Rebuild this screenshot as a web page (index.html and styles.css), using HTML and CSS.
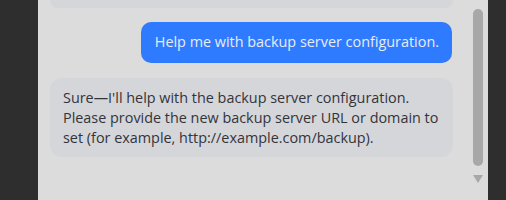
FILE: index.html
```html
<!DOCTYPE html>
<html>
<head>
<meta charset="utf-8">
<link rel="stylesheet" href="styles.css">
</head>
<body>
<div class="app">
  <div class="gutter"></div>
  <div class="panel">
    <div class="messages">
      <div class="bubble-tail"></div>
      <div class="row user-row">
        <div class="bubble user">Help me with backup server configuration.</div>
      </div>
      <div class="row">
        <div class="bubble assistant">Sure—I'll help with the backup server configuration. Please provide the new backup server URL or domain to set (for example, http://example.com/backup).</div>
      </div>
    </div>
    <div class="scrollbar">
      <div class="thumb"></div>
      <div class="arrow"></div>
    </div>
  </div>
  <div class="gutter-right"></div>
</div>
</body>
</html>
```
FILE: styles.css
```css
html, body {
  margin: 0;
  padding: 0;
  background: #2e2e2e;
  width: 506px;
  height: 200px;
  overflow: hidden;
}
.app {
  display: flex;
  height: 200px;
  font-family: "Open Sans", "Noto Sans", sans-serif;
}
.gutter {
  width: 38px;
  flex: none;
}
.gutter-right {
  flex: 1;
}
.panel {
  width: 450px;
  flex: none;
  background: #dcdcdc;
  display: flex;
}
.messages {
  width: 403px;
  padding-left: 12px;
  display: flex;
  flex-direction: column;
}
.bubble-tail {
  height: 8px;
  background: #d5d6da;
  border-radius: 0 0 12px 12px;
}
.row {
  display: flex;
}
.user-row {
  justify-content: flex-end;
  margin-top: 14px;
}
.bubble {
  font-size: 14.4px;
  line-height: 20px;
  border-radius: 10px;
}
.user {
  background: #2f7bff;
  color: #e9ecf3;
  padding: 10px 13px 11px 14px;
  margin-right: 1px;
}
.row + .row {
  margin-top: 15px;
}
.assistant {
  background: #d5d6da;
  color: #33343a;
  padding: 10px 13px 9px 13px;
  border-radius: 12px;
}
.scrollbar {
  width: 10px;
  margin-left: 20px;
  padding-top: 9px;
  display: flex;
  flex-direction: column;
  align-items: center;
}
.thumb {
  width: 10px;
  height: 157px;
  background: #a8a8a8;
  border-radius: 5px;
}
.arrow {
  margin-top: 9px;
  width: 0;
  height: 0;
  border-left: 5px solid transparent;
  border-right: 5px solid transparent;
  border-top: 8px solid #a8a8a8;
}
```
